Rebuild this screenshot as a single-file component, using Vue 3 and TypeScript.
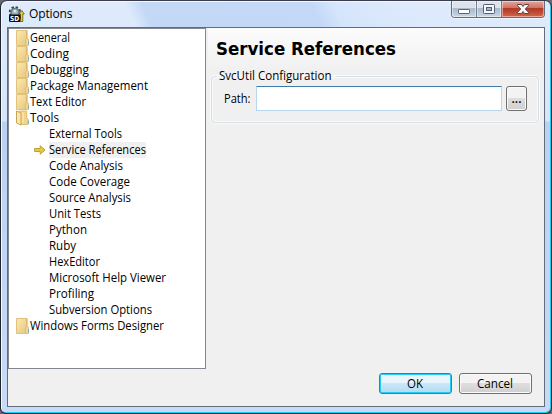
<script setup lang="ts">
import { ref } from 'vue'

interface TreeItem {
  label: string
  kind: 'folder' | 'open' | 'leaf'
  w: number
}

const items: TreeItem[] = [
  { label: 'General', kind: 'folder', w: 40 },
  { label: 'Coding', kind: 'folder', w: 39 },
  { label: 'Debugging', kind: 'folder', w: 59 },
  { label: 'Package Management', kind: 'folder', w: 118 },
  { label: 'Text Editor', kind: 'folder', w: 56 },
  { label: 'Tools', kind: 'open', w: 29 },
  { label: 'External Tools', kind: 'leaf', w: 73 },
  { label: 'Service References', kind: 'leaf', w: 97 },
  { label: 'Code Analysis', kind: 'leaf', w: 74 },
  { label: 'Code Coverage', kind: 'leaf', w: 81 },
  { label: 'Source Analysis', kind: 'leaf', w: 82 },
  { label: 'Unit Tests', kind: 'leaf', w: 52 },
  { label: 'Python', kind: 'leaf', w: 38 },
  { label: 'Ruby', kind: 'leaf', w: 27 },
  { label: 'HexEditor', kind: 'leaf', w: 51 },
  { label: 'Microsoft Help Viewer', kind: 'leaf', w: 117 },
  { label: 'Profiling', kind: 'leaf', w: 45 },
  { label: 'Subversion Options', kind: 'leaf', w: 103 },
  { label: 'Windows Forms Designer', kind: 'folder', w: 134 },
]
const selected = ref('Service References')
const path = ref('')
</script>

<template>
  <div class="window">
    <header class="titlebar">
      <svg class="app-icon" width="17" height="17" viewBox="0 0 17 17">
        <circle cx="7" cy="6.500" r="5" fill="none" stroke="#38454d" stroke-width="2.600" stroke-dasharray="2.200 1.730" />
        <circle cx="7" cy="6.500" r="4" fill="#9badb5" stroke="#66777f" stroke-width="1.600" />
        <circle cx="7" cy="5" r="1.600" fill="#dce6ed" />
        <path d="M11 15.500h3.800V8h1.500L13.800 4.500 11 8h1.500v5H11z" fill="#e8d51c" stroke="#605a10" stroke-width=".8" />
        <rect x="1" y="8.500" width="11.500" height="7.500" rx="1.500" fill="#080b0c" />
        <text x="2" y="15" class="logo-text" textLength="9.200" lengthAdjust="spacingAndGlyphs">SD</text>
      </svg>
      <span class="title">Options</span>
      <div class="controls">
        <span class="ctl min">
          <svg width="24" height="15" viewBox="0 0 24 15"><rect x="6.5" y="7.500" width="11" height="4" rx=".6" fill="#fff" stroke="#596476" /></svg>
        </span>
        <span class="ctl max">
          <svg width="24" height="15" viewBox="0 0 24 15"><rect x="6.5" y="2.500" width="11" height="9" rx=".8" fill="#f7f8fa" stroke="#535e70" /><rect x="9.5" y="5.500" width="5" height="3" fill="#a4b4d2" stroke="#535e70" /></svg>
        </span>
        <span class="ctl close">
          <svg width="42" height="15" viewBox="0 0 42 15"><path d="M15.500 2.500h4l1.500 2 1.500-2h4v1.200l-3.200 3.300 3.200 3.300v1.200h-4l-1.500-2-1.500 2h-4v-1.200l3.200-3.300-3.200-3.300z" fill="#f7f7f7" stroke="#59404a" /></svg>
        </span>
      </div>
    </header>

    <main class="client">
      <ul class="tree">
        <li v-for="item in items" :key="item.label" :class="['row', item.kind]">
          <svg v-if="item.kind === 'folder'" class="folder" width="14" height="16" viewBox="0 0 14 16">
            <defs>
              <linearGradient id="fold" x1="0" y1="0" x2="1" y2="1">
                <stop offset="0" stop-color="#fbe9b3" /><stop offset="1" stop-color="#e7c77b" />
              </linearGradient>
            </defs>
            <path d="M.5.5h10.200v15H.5z" fill="url(#fold)" stroke="#e0c27d" />
            <path d="M11 .5v7.500" fill="none" stroke="#cfac63" />
            <path d="M9.500 10q1.200-3 3-.8v6.300h-3z" fill="#f1d590" stroke="#dbb86c" stroke-width=".8" />
            <path d="M12.500 11v3.500" stroke="#65b8d4" />
          </svg>
          <svg v-else-if="item.kind === 'open'" class="folder" width="14" height="16" viewBox="0 0 14 16">
            <path d="M3.500 1h7.200v7l1.300 1v5.500H3.500z" fill="#f3d387" stroke="#e0bd72" />
            <path d="M.5 1l4.500 2v12L.5 13z" fill="#fae7ad" stroke="#cba557" />
            <path d="M7 2.500v10" stroke="#fff0c1" /><path d="M12.500 10.500v3.500" stroke="#65b8d4" />
          </svg>
          <svg v-else-if="item.label === selected" class="arrow" width="12" height="10" viewBox="0 0 12 10">
            <path d="M.6 3.500h5.600V.8L11 5 6.200 9.200V6.500H.6z" fill="#e8c93c" stroke="#bca13a" />
          </svg>
          <span :class="['label', { selected: item.label === selected }]" @click="selected = item.label">
            <svg :width="item.w" height="16"><text x="0" y="12" :textLength="item.w" lengthAdjust="spacingAndGlyphs">{{ item.label }}</text></svg>
          </span>
        </li>
      </ul>

      <section class="panel">
        <h1><svg width="182" height="26"><text x="0" y="19" textLength="180" lengthAdjust="spacingAndGlyphs">Service References</text></svg></h1>
        <fieldset>
          <legend><svg width="113" height="16"><text x="0" y="12" textLength="112.500" lengthAdjust="spacingAndGlyphs">SvcUtil Configuration</text></svg></legend>
          <label for="path"><svg width="27" height="16"><text x="0" y="12" textLength="26.500" lengthAdjust="spacingAndGlyphs">Path:</text></svg></label>
          <input id="path" v-model="path" type="text" />
          <button class="browse">...</button>
        </fieldset>
      </section>

      <footer>
        <button class="ok"><svg width="17" height="16"><text x="0" y="12" textLength="16" lengthAdjust="spacingAndGlyphs">OK</text></svg></button>
        <button class="cancel"><svg width="37" height="16"><text x="0" y="12" textLength="36" lengthAdjust="spacingAndGlyphs">Cancel</text></svg></button>
      </footer>
    </main>
  </div>
</template>

<style>
body {
  background: #666a74;
  overflow: hidden;
}
</style>

<style scoped>
* {
  box-sizing: border-box;
}
svg {
  display: block;
  flex: none;
  overflow: visible;
}
.window {
  width: 552px;
  height: 414px;
  border: 1px solid #20242c;
  border-top-color: #3b3b4c;
  border-radius: 7px 7px 6px 6px;
  box-shadow: inset 1px 1px #f1f8ff, inset -1px -1px #1bcdf2;
  padding: 0 6px 6px;
  background:
    linear-gradient(65deg, transparent 24%, rgba(168, 198, 238, 0.5) 27%, rgba(180, 207, 244, 0.65) 57%, rgba(190, 215, 250, 0.3) 61%, transparent 75%) 0 0 / 100% 26px no-repeat,
    linear-gradient(#dfebfc 0, #d6e5fb 120px, #b9d2f3 121px, #c8daf6);
  font: 12px/16px "Open Sans", "Noto Sans", sans-serif;
  color: #000;
}
.titlebar {
  height: 26px;
  display: flex;
  align-items: flex-start;
}
.app-icon {
  margin: 5px 0 0 1px;
}
.logo-text {
  font: bold 7px "DejaVu Sans", sans-serif;
  fill: #fff;
}
.title {
  margin: 5px 0 0 4px;
  letter-spacing: -0.15px;
}
.controls {
  display: flex;
  height: 17px;
  margin-left: auto;
  border: 1px solid #626c7d;
  border-top: 0;
  border-radius: 0 0 4px 4px;
  box-shadow: 0 1px #edf5ff;
}
.ctl {
  height: 16px;
  padding-top: 1px;
  border-right: 1px solid #737e90;
  background: linear-gradient(#dce3ed 0 45%, #aab9cd 47%, #c8d6e7);
  box-shadow: inset 0 0 0 1px rgba(255, 255, 255, 0.45);
}
.min {
  border-bottom-left-radius: 3px;
}
.close {
  border-right: 0;
  border-bottom-right-radius: 3px;
  background: linear-gradient(#e2a79c 0, #cc7062 45%, #b03624 47%, #d4654a);
}
.client {
  height: 380px;
  border: 1px solid #626c7d;
  background: #f0f0f0;
  display: grid;
  grid-template-columns: 198px 1fr;
  grid-template-rows: 341px 1fr;
  column-gap: 2px;
}
.tree {
  margin: 0;
  padding: 1px 0 0 7px;
  list-style: none;
  background: #fff;
  border: 1px solid #828790;
}
.row {
  height: 16px;
  display: flex;
  align-items: center;
}
.leaf {
  padding-left: 33px;
}
.arrow {
  margin: 0 3px 0 -15px;
}
.selected {
  background: #f0f0f0;
}
.panel {
  background: linear-gradient(#fcfcfc, #f0f0f0 43px);
  padding: 8px 5px 0 3px;
}
h1 {
  height: 26px;
  margin: 0 0 6px 5px;
  font: bold 17.5px/26px "DejaVu Sans Condensed", "DejaVu Sans", sans-serif;
}
fieldset {
  height: 55px;
  margin: 0;
  min-width: 0;
  padding: 2px 10px 0 12px;
  border: 1px solid #d5dfe5;
  border-radius: 4px;
  box-shadow: 0 0 0 1px #fafafa, inset 0 0 0 1px #fafafa;
  display: flex;
  align-items: flex-start;
}
legend {
  height: 16px;
  margin-left: -7px;
  padding: 0 4px 0 2px;
}
label {
  width: 32px;
  padding-top: 5px;
}
input {
  width: 246px;
  height: 25px;
  padding: 2px 4px;
  border: 1px solid #b5d7ee;
  border-top-color: #3d7bad;
  background: #fff;
  font: inherit;
  outline: none;
}
button {
  padding: 0;
  border: 1px solid #707070;
  border-radius: 3px;
  background: linear-gradient(#f3f3f3 0 48%, #dedede 50%, #cfcfcf);
  box-shadow: inset 0 0 0 1px #fafafa;
  font: inherit;
  color: #000;
  display: flex;
  justify-content: center;
  align-items: center;
}
.browse {
  width: 21px;
  height: 25px;
  margin-left: 4px;
  font-weight: 600;
}
footer {
  grid-column: 1 / -1;
  display: flex;
  justify-content: flex-end;
  gap: 7px;
  padding: 4px 12px 0 0;
}
footer button {
  width: 73px;
  height: 21px;
}
.ok {
  border-color: #3c7fb1;
  background: linear-gradient(#e9f5fc 0 48%, #cbe8f8 50%, #afdcf4);
  box-shadow: inset 0 0 0 1px #25c9f5;
}
</style>
